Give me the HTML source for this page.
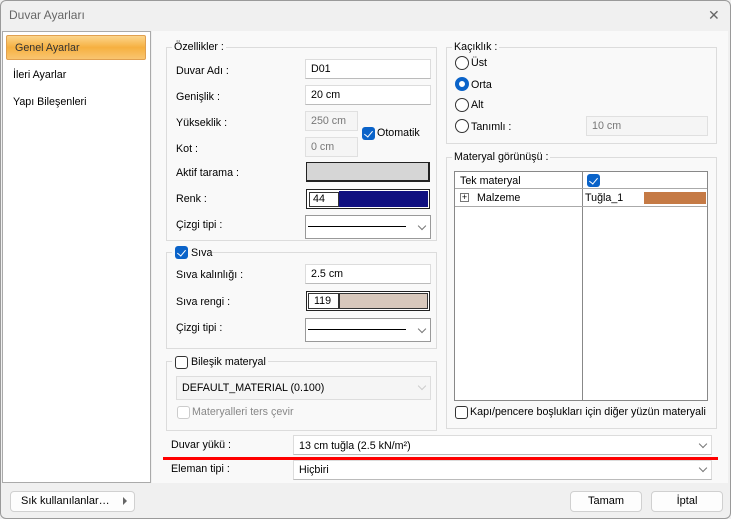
<!DOCTYPE html>
<html><head><meta charset="utf-8"><style>
*{box-sizing:border-box;margin:0;padding:0}
body{width:731px;height:519px;background:#f0f0f0;font-family:"Liberation Sans","DejaVu Sans",sans-serif;font-size:10.7px;color:#000;position:relative;overflow:hidden}
.a{position:absolute}
.win{left:0;top:0;width:731px;height:519px;border:1px solid #9a9a9a;border-radius:6px;background:#f0f0f0}
.title{left:9px;top:8px;color:#666;font-size:12px}
.inp{position:absolute;background:#fff;border:1px solid #dcdcdc;border-bottom-color:#bbb;padding-left:5px;line-height:18px;height:20px}
.dis{background:#f5f5f5;color:#777;border-color:#e0e0e0}
.grp{position:absolute;border:1px solid #dcdcdc;}
.gl{position:absolute;background:#f9f9f9;padding:0 2px}
.cb{position:absolute;width:13px;height:13px;border-radius:3px;background:#0a63c9}
.cb:after{content:"";position:absolute;left:4px;top:2px;width:4px;height:7px;border:solid #fff;border-width:0 1.3px 1.3px 0;transform:rotate(40deg)}
.cbe{position:absolute;width:13px;height:13px;border-radius:3px;border:1px solid #333;background:#fff}
.rb{position:absolute;width:14px;height:14px;border-radius:50%;border:1px solid #333;background:#fff}
.chev{position:absolute;width:6px;height:6px;border:solid #777;border-width:0 1px 1px 0;transform:rotate(45deg)}
.btn{position:absolute;background:#fdfdfd;border:1px solid #d0d0d0;border-radius:4px;text-align:center;line-height:19px;height:21px;font-size:11px}
</style></head><body>
<div class="a win"></div>
<div class="a title">Duvar Ayarları</div>
<div class="a" style="left:708px;top:7px;color:#666;font-size:14px;font-weight:300">✕</div>
<div class="a" style="left:2px;top:31px;width:149px;height:452px;background:#fff;border:1px solid #aaa"></div>
<div class="a" style="left:6px;top:35px;width:140px;height:25px;border:1px solid #e0a050;border-radius:2px;background:linear-gradient(#fcd58c,#f6b040 50%,#f9c570);padding:6px 8px;color:#333">Genel Ayarlar</div>
<div class="a" style="left:13px;top:69px">İleri Ayarlar</div>
<div class="a" style="left:13px;top:96px">Yapı Bileşenleri</div>
<div class="a" style="left:152px;top:31px;width:576px;height:452px;background:#f9f9f9"></div>
<div class="grp" style="left:166px;top:47px;width:271px;height:194px"></div>
<div class="gl" style="left:172px;top:41px">Özellikler :</div>
<div class="a" style="left:176px;top:65px">Duvar Adı :</div>
<div class="inp" style="left:305px;top:59px;width:126px">D01</div>
<div class="a" style="left:176px;top:91px">Genişlik :</div>
<div class="inp" style="left:305px;top:85px;width:126px">20 cm</div>
<div class="a" style="left:176px;top:117px">Yükseklik :</div>
<div class="inp dis" style="left:305px;top:111px;width:53px">250 cm</div>
<div class="cb" style="left:362px;top:127px"></div>
<div class="a" style="left:377px;top:127px">Otomatik</div>
<div class="a" style="left:176px;top:143px">Kot :</div>
<div class="inp dis" style="left:305px;top:137px;width:53px">0 cm</div>
<div class="a" style="left:176px;top:167px">Aktif tarama :</div>
<div class="a" style="left:306px;top:162px;width:124px;height:20px;border:1px solid #222;border-right-width:2px;border-bottom-width:2px;background:#d6d6d6"></div>
<div class="a" style="left:176px;top:193px">Renk :</div>
<div class="a" style="left:306px;top:189px;width:124px;height:20px;border:1px solid #222;background:#fff"></div>
<div class="a" style="left:309px;top:192px;width:30px;height:15px;border:1px solid #333;background:#fff;padding-left:3px;line-height:13px">44</div>
<div class="a" style="left:339px;top:191px;width:89px;height:16px;background:#101080"></div>
<div class="a" style="left:176px;top:219px">Çizgi tipi :</div>
<div class="inp" style="left:305px;top:215px;width:126px;height:24px;border-color:#999"></div>
<div class="a" style="left:308px;top:226px;width:98px;height:1px;background:#000"></div>
<div class="chev" style="left:419px;top:223px"></div>
<div class="grp" style="left:166px;top:252px;width:271px;height:97px"></div>
<div class="gl" style="left:172px;top:245px;width:40px;height:14px"></div>
<div class="cb" style="left:175px;top:246px"></div>
<div class="a" style="left:191px;top:247px">Sıva</div>
<div class="a" style="left:176px;top:269px">Sıva kalınlığı :</div>
<div class="inp" style="left:305px;top:264px;width:126px">2.5 cm</div>
<div class="a" style="left:176px;top:296px">Sıva rengi :</div>
<div class="a" style="left:306px;top:291px;width:124px;height:20px;border:1px solid #222;background:#fff"></div>
<div class="a" style="left:308px;top:293px;width:31px;height:16px;border:1px solid #333;background:#fff;padding-left:5px;line-height:14px">119</div>
<div class="a" style="left:339px;top:293px;width:89px;height:16px;background:#d8c8bc;border:1px solid #333"></div>
<div class="a" style="left:176px;top:322px">Çizgi tipi :</div>
<div class="inp" style="left:305px;top:318px;width:126px;height:24px;border-color:#999"></div>
<div class="a" style="left:308px;top:329px;width:98px;height:1px;background:#000"></div>
<div class="chev" style="left:419px;top:326px"></div>
<div class="grp" style="left:166px;top:361px;width:271px;height:70px"></div>
<div class="gl" style="left:172px;top:354px;width:96px;height:14px"></div>
<div class="cbe" style="left:175px;top:356px"></div>
<div class="a" style="left:191px;top:356px">Bileşik materyal</div>
<div class="inp" style="left:176px;top:376px;width:255px;height:24px;line-height:22px;background:#f5f5f5;border-color:#ddd">DEFAULT_MATERIAL (0.100)</div>
<div class="chev" style="left:419px;top:383px;border-color:#ccc"></div>
<div class="cbe" style="left:177px;top:406px;border-color:#ccc"></div>
<div class="a" style="left:192px;top:406px;color:#888">Materyalleri ters çevir</div>
<div class="grp" style="left:446px;top:47px;width:271px;height:97px"></div>
<div class="gl" style="left:452px;top:41px">Kaçıklık :</div>
<div class="rb" style="left:455px;top:56px"></div><div class="a" style="left:471px;top:57px">Üst</div>
<div class="rb" style="left:455px;top:77px;border:4px solid #0a63c9"></div><div class="a" style="left:471px;top:79px">Orta</div>
<div class="rb" style="left:455px;top:98px"></div><div class="a" style="left:471px;top:99px">Alt</div>
<div class="rb" style="left:455px;top:119px"></div><div class="a" style="left:471px;top:121px">Tanımlı :</div>
<div class="inp dis" style="left:586px;top:116px;width:122px">10 cm</div>
<div class="grp" style="left:446px;top:157px;width:271px;height:272px"></div>
<div class="gl" style="left:452px;top:151px">Materyal görünüşü :</div>
<div class="a" style="left:454px;top:171px;width:254px;height:230px;background:#fff;border:1px solid #888"></div>
<div class="a" style="left:582px;top:171px;width:1px;height:230px;background:#888"></div>
<div class="a" style="left:455px;top:188px;width:252px;height:1px;background:#aaa"></div>
<div class="a" style="left:455px;top:206px;width:252px;height:1px;background:#aaa"></div>
<div class="a" style="left:460px;top:175px">Tek materyal</div>
<div class="cb" style="left:587px;top:174px"></div>
<div class="a" style="left:460px;top:193px;width:9px;height:9px;border:1px solid #777;font-size:9px;line-height:7px;text-align:center">+</div>
<div class="a" style="left:477px;top:192px">Malzeme</div>
<div class="a" style="left:585px;top:192px">Tuğla_1</div>
<div class="a" style="left:644px;top:192px;width:62px;height:12px;background:#c57a45"></div>
<div class="cbe" style="left:455px;top:406px"></div>
<div class="a" style="left:470px;top:406px">Kapı/pencere boşlukları için diğer yüzün materyali</div>
<div class="a" style="left:171px;top:439px">Duvar yükü :</div>
<div class="inp" style="left:293px;top:435px;width:419px;line-height:20px">13 cm tuğla (2.5 kN/m²)</div>
<div class="chev" style="left:700px;top:441px"></div>
<div class="a" style="left:163px;top:457px;width:555px;height:3px;background:#f00"></div>
<div class="a" style="left:171px;top:463px">Eleman tipi :</div>
<div class="inp" style="left:293px;top:460px;width:419px">Hiçbiri</div>
<div class="chev" style="left:700px;top:465px"></div>
<div class="btn" style="left:10px;top:491px;width:125px;text-align:left;padding-left:10px">Sık kullanılanlar…</div>
<div class="a" style="left:123px;top:497px;width:0;height:0;border-left:4px solid #666;border-top:4px solid transparent;border-bottom:4px solid transparent"></div>
<div class="btn" style="left:570px;top:491px;width:72px">Tamam</div>
<div class="btn" style="left:651px;top:491px;width:72px">İptal</div>
</body></html>
